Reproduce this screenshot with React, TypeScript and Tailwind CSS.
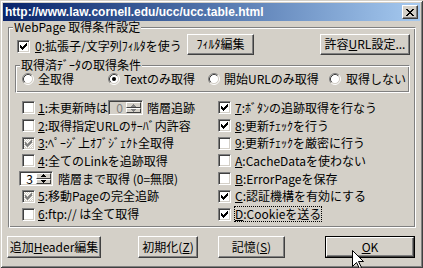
import type { ReactNode } from 'react';

const bevel =
  'border border-t-white border-l-white border-r-[#404040] border-b-[#404040] bg-[#d4d0c8] shadow-[inset_-1px_-1px_0_#808080]';
const sunken =
  'border border-t-[#808080] border-l-[#808080] border-r-white border-b-white shadow-[inset_1px_1px_0_#404040,inset_-1px_-1px_0_#d4d0c8]';
const etched =
  'border border-t-[#808080] border-l-[#808080] border-r-white border-b-white shadow-[inset_1px_1px_0_#fff,inset_-1px_-1px_0_#808080]';

function Check({ on, dis }: { on?: boolean; dis?: boolean }) {
  const bg =
    on && dis
      ? 'bg-[image:repeating-conic-gradient(#d4d0c8_0%_25%,#fff_0%_50%)] bg-[length:2px_2px]'
      : dis
        ? 'bg-[#d4d0c8]'
        : 'bg-white';
  return (
    <span className={`flex h-[13px] w-[13px] shrink-0 items-center justify-center ${sunken} ${bg}`}>
      {on && (
        <svg width="7" height="7" viewBox="0 0 7 7">
          <path
            d="M0 2h1v3H0z M1 3h1v3H1z M2 4h1v3H2z M3 3h1v3H3z M4 2h1v3H4z M5 1h1v3H5z M6 0h1v3H6z"
            fill={dis ? '#808080' : '#000'}
          />
        </svg>
      )}
    </span>
  );
}

function Radio({ on }: { on?: boolean }) {
  return (
    <svg width="12" height="12" viewBox="0 0 12 12" className="shrink-0">
      <circle cx="6" cy="6" r="4.5" fill="#fff" />
      <path d="M2.11 9.89A5.5 5.5 0 0 1 9.89 2.11" fill="none" stroke="#808080" />
      <path d="M9.89 2.11A5.5 5.5 0 0 1 2.11 9.89" fill="none" stroke="#fff" />
      <path d="M2.82 9.18A4.5 4.5 0 0 1 9.18 2.82" fill="none" stroke="#404040" />
      <path d="M9.18 2.82A4.5 4.5 0 0 1 2.82 9.18" fill="none" stroke="#d4d0c8" />
      {on && <circle cx="6" cy="6" r="2" fill="#000" />}
    </svg>
  );
}

function SpinBtn({ up, dis }: { up?: boolean; dis?: boolean }) {
  return (
    <div className="flex flex-1 items-center justify-center border border-t-white border-l-white border-r-[#404040] border-b-[#404040] bg-[#d4d0c8]">
      <svg width="5" height="3" viewBox="0 0 5 3">
        <path
          d={up ? 'M2 0h1v1h1v1h1v1H0V2h1V1h1z' : 'M0 0h5v1H4v1H3v1H2V2H1V1H0z'}
          fill={dis ? '#808080' : '#000'}
        />
      </svg>
    </div>
  );
}

function Spin({ v, dis, w }: { v: string; dis?: boolean; w: string }) {
  return (
    <div
      className={`flex h-[15px] shrink-0 p-[1px] ${sunken} ${w} ${
        dis ? 'bg-[#d4d0c8] text-[#808080]' : 'bg-white'
      }`}
    >
      <span className="flex-1 pr-[3px] text-right leading-[11px]">{v}</span>
      <div className="flex w-[15px] flex-col">
        <SpinBtn up dis={dis} />
        <SpinBtn dis={dis} />
      </div>
    </div>
  );
}

function Btn({ className, children }: { className: string; children: ReactNode }) {
  return (
    <button className={`flex items-center justify-center whitespace-nowrap text-[12px] leading-[14px] ${bevel} ${className}`}>
      {children}
    </button>
  );
}

function Item({
  on,
  dis,
  focus,
  k,
  text,
  pad,
}: {
  on?: boolean;
  dis?: boolean;
  focus?: boolean;
  k: string;
  text: string;
  pad: string;
}) {
  return (
    <div className={`flex items-center whitespace-nowrap ${pad}`}>
      <Check on={on} dis={dis} />
      <span
        className={`border leading-[14px] ${focus ? 'border-dotted border-black' : 'border-transparent'} ${
          pad === 'pl-[9px]' ? 'ml-[2px]' : 'ml-[3px]'
        }`}
      >
        <u>{k}</u>
        {text}
      </span>
    </div>
  );
}

export default function App() {
  return (
    <div className="relative h-[268px] w-[423px] overflow-hidden bg-[#d4d0c8] p-[3px] font-['Noto_Sans_CJK_JP',sans-serif] text-[12px] leading-[14px] text-black shadow-[inset_1px_1px_0_#d4d0c8,inset_-1px_-1px_0_#404040,inset_2px_2px_0_#fff,inset_-2px_-2px_0_#808080]">
      {/* title bar */}
      <div className="flex h-[18px] items-center bg-linear-to-r from-[#0a246a] to-[#a6caf0] pl-[2px] pr-[2px]">
        <span className="flex-1 font-['Liberation_Sans',Arial,sans-serif] text-[12px] font-bold leading-[18px] text-white">
          http://www.law.cornell.edu/ucc/ucc.table.html
        </span>
        <button className={`flex h-[14px] w-[16px] items-center justify-center ${bevel}`}>
          <svg width="8" height="7" viewBox="0 0 8 7">
            <path
              d="M0 0h2v1H0z M6 0h2v1H6z M1 1h2v1H1z M5 1h2v1H5z M2 2h4v1H2z M3 3h2v1H3z M2 4h4v1H2z M1 5h2v1H1z M5 5h2v1H5z M0 6h2v1H0z M6 6h2v1H6z"
              fill="#000"
            />
          </svg>
        </button>
      </div>

      <fieldset className={`ml-[5px] w-[407px] pb-[4px] pl-[4px] pr-[5px] ${etched}`}>
        <legend className="bg-[#d4d0c8] px-[1px] leading-[12px]">WebPage 取得条件設定</legend>

        <div className="flex h-[22px] items-center">
          <div className="mt-[4px] flex w-[174px] items-center whitespace-nowrap pl-[4px]">
            <Check on />
            <span className="ml-[4px] border border-transparent">
              <u>0</u>:拡張子/文字列ﾌｨﾙﾀを使う
            </span>
          </div>
          <Btn className="h-[21px] w-[67px]">ﾌｨﾙﾀ編集</Btn>
          <Btn className="ml-auto h-[21px] w-[90px]">
            許容<u>U</u>RL設定...
          </Btn>
        </div>

        <fieldset className={`ml-[2px] mt-[4px] w-[395px] pb-[5px] pl-[4px] ${etched}`}>
          <legend className="bg-[#d4d0c8] px-[1px] leading-[12px]">取得済ﾃﾞｰﾀの取得条件</legend>
          <div className="flex h-[16px] items-center whitespace-nowrap pl-[2px]">
            <div className="flex w-[86px] items-center gap-[4px]">
              <Radio />
              <span>全取得</span>
            </div>
            <div className="flex w-[100px] items-center gap-[4px]">
              <Radio on />
              <span>Textのみ取得</span>
            </div>
            <div className="flex w-[121px] items-center gap-[4px]">
              <Radio />
              <span>開始URLのみ取得</span>
            </div>
            <div className="flex items-center gap-[5px]">
              <Radio />
              <span>取得しない</span>
            </div>
          </div>
        </fieldset>

        <div className="mt-[6px] grid h-[124px] grid-flow-col grid-cols-[205px_1fr] grid-rows-7">
          <div className="flex items-center whitespace-nowrap pl-[9px]">
            <Check />
            <span className="ml-[2px] w-[71px] border border-transparent">
              <u>1</u>:未更新時は
            </span>
            <Spin v="0" dis w="w-[35px]" />
            <span className="ml-[4px]">階層追跡</span>
          </div>
          <Item pad="pl-[9px]" k="2" text=":取得指定URLのｻｰﾊﾞ内許容" />
          <Item pad="pl-[9px]" k="3" text=":ﾍﾟｰｼﾞ上ｵﾌﾞｼﾞｪｸﾄ全取得" on dis />
          <Item pad="pl-[9px]" k="4" text=":全てのLinkを追跡取得" />
          <div className="flex items-center whitespace-nowrap pl-[6px]">
            <Spin v="3" w="w-[34px]" />
            <span className="ml-[5px]">階層まで取得 (0=無限)</span>
          </div>
          <Item pad="pl-[9px]" k="5" text=":移動Pageの完全追跡" on dis />
          <Item pad="pl-[9px]" k="6" text=":ftp:// は全て取得" />

          <Item pad="pl-0" k="7" text=":ﾎﾞﾀﾝの追跡取得を行なう" on />
          <Item pad="pl-0" k="8" text=":更新ﾁｪｯｸを行う" on />
          <Item pad="pl-0" k="9" text=":更新ﾁｪｯｸを厳密に行う" />
          <Item pad="pl-0" k="A" text=":CacheDataを使わない" />
          <Item pad="pl-0" k="B" text=":ErrorPageを保存" />
          <Item pad="pl-0" k="C" text=":認証機構を有効にする" on />
          <Item pad="pl-0" k="D" text=":Cookieを送る" on focus />
        </div>
      </fieldset>

      <div className="mt-[8px] flex h-[22px] items-start">
        <Btn className="ml-[4px] h-[22px] w-[94px]">
          追加<u>H</u>eader編集
        </Btn>
        <Btn className="ml-[37px] h-[22px] w-[60px]">
          初期化(<u>Z</u>)
        </Btn>
        <Btn className="ml-[20px] h-[22px] w-[67px]">
          記憶(<u>S</u>)
        </Btn>
        <div className="ml-[40px] flex h-[22px] w-[90px] border border-black">
          <Btn className="h-full w-full">
            <u>O</u>K
          </Btn>
        </div>
      </div>

      {/* mouse pointer */}
      <svg className="absolute left-[352px] top-[250px]" width="13" height="20" viewBox="0 0 13 20">
        <path d="M0.5 0.5V16.5L4.5 12.5L7.5 18.5L9.5 17.5L6.5 11.5H11.5Z" fill="#fff" stroke="#000" />
      </svg>
    </div>
  );
}
